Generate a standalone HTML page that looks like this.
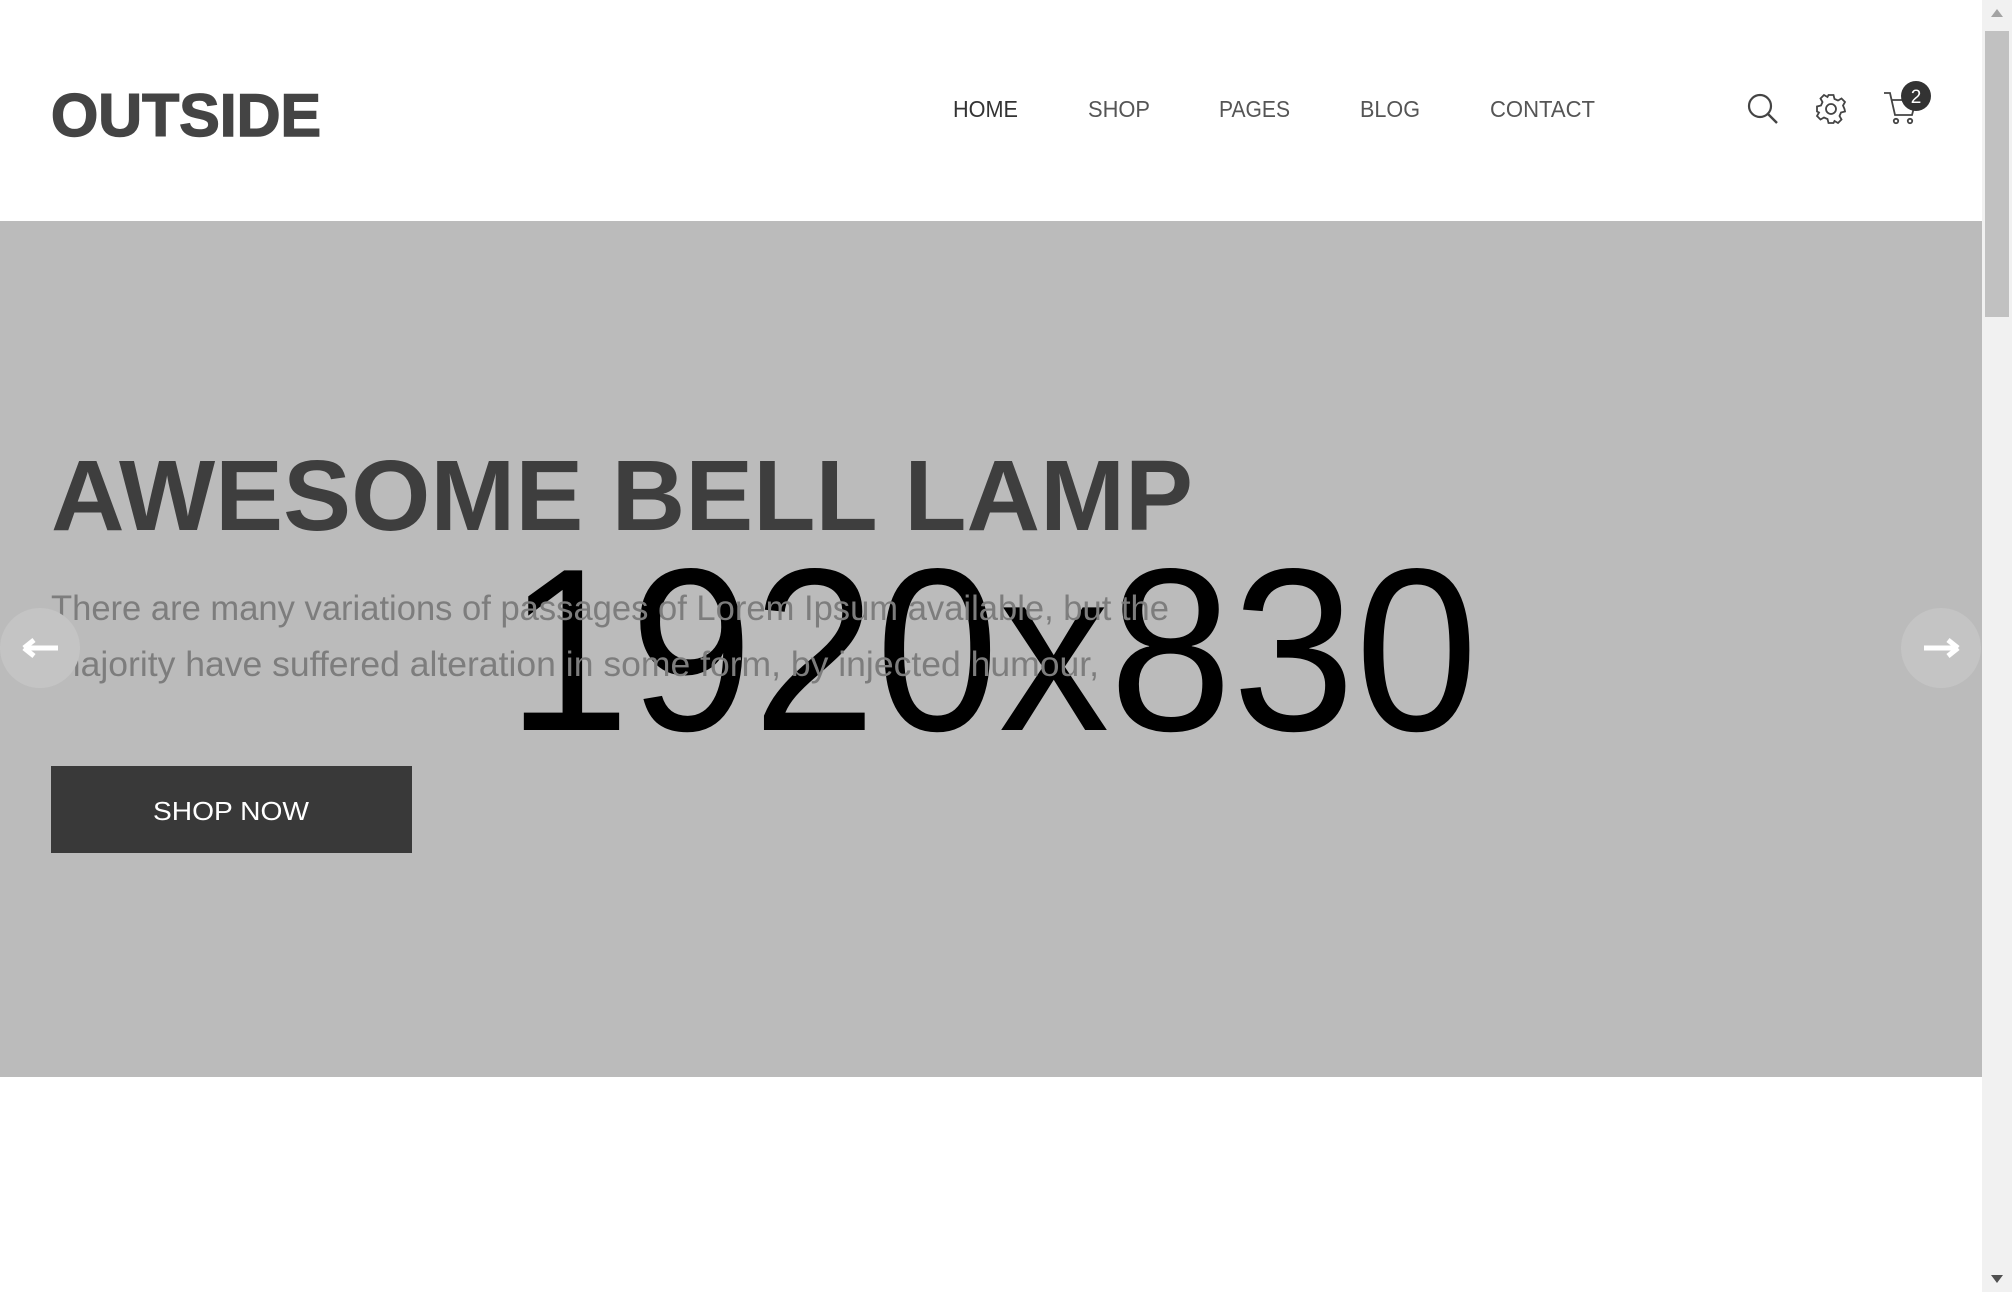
<!DOCTYPE html>
<html><head><meta charset="utf-8"><style>
html,body{margin:0;padding:0;width:2012px;height:1292px;overflow:hidden;background:#fff;font-family:"Liberation Sans",sans-serif}
.abs{position:absolute}
</style></head><body>
<svg class="abs" style="left:0;top:0" width="2012" height="1292" xmlns="http://www.w3.org/2000/svg">
<rect x="0" y="0" width="1982" height="1292" fill="#fff"/>
<text x="51" y="136" font-family="Liberation Sans" font-weight="bold" font-size="60" fill="#444" textLength="270" lengthAdjust="spacingAndGlyphs" stroke="#444" stroke-width="1.5">OUTSIDE</text>
<g font-family="Liberation Sans" font-size="23" fill="#555">
<text x="953" y="117" fill="#333" textLength="65" lengthAdjust="spacingAndGlyphs">HOME</text>
<text x="1088" y="117" textLength="62" lengthAdjust="spacingAndGlyphs">SHOP</text>
<text x="1219" y="117" textLength="71" lengthAdjust="spacingAndGlyphs">PAGES</text>
<text x="1360" y="117" textLength="60" lengthAdjust="spacingAndGlyphs">BLOG</text>
<text x="1490" y="117" textLength="105" lengthAdjust="spacingAndGlyphs">CONTACT</text>
</g>
<circle cx="1760" cy="106" r="11" fill="none" stroke="#444" stroke-width="2.2"/>
<line x1="1768" y1="114" x2="1777" y2="123" stroke="#444" stroke-width="2.4"/>
<g transform="translate(1831,109)" fill="none" stroke="#444" stroke-width="1.8">
<circle r="5"/>
<path d="M-2.5,-14 L2.5,-14 L3.5,-10 L7,-8.5 L10.5,-10.5 L14,-7 L12,-3.5 L13.5,0 L14,2.5 L10,3.5 L8.5,7 L10.5,10.5 L7,14 L3.5,12 L2.5,14 L-2.5,14 L-3.5,10 L-7,8.5 L-10.5,10.5 L-14,7 L-12,3.5 L-14,2.5 L-14,-2.5 L-10,-3.5 L-8.5,-7 L-10.5,-10.5 L-7,-14 L-3.5,-12 Z"/>
</g>
<g fill="none" stroke="#444" stroke-width="1.8">
<path d="M1884,93 L1890,93 L1895,115 L1912,115 L1916,100 L1892,100"/>
<circle cx="1896" cy="121" r="2.2"/><circle cx="1910" cy="121" r="2.2"/>
</g>
<circle cx="1916" cy="96" r="15" fill="#333"/>
<text x="1916" y="103" text-anchor="middle" font-size="19" fill="#fff" font-family="Liberation Sans">2</text>
<rect x="0" y="221" width="1982" height="856" fill="#bbb"/>
<text x="51" y="530" font-family="Liberation Sans" font-weight="bold" font-size="100" fill="#3e3e3e" textLength="1142" lengthAdjust="spacingAndGlyphs">AWESOME BELL LAMP</text>
<text x="507" y="730" font-family="Liberation Sans" font-size="232" fill="#000" textLength="971" lengthAdjust="spacingAndGlyphs">1920x830</text>
<g font-family="Liberation Sans" font-size="35" fill="#7d7d7d">
<text x="51" y="620" textLength="1118" lengthAdjust="spacingAndGlyphs">There are many variations of passages of Lorem Ipsum available, but the</text>
<text x="51" y="676" textLength="1048" lengthAdjust="spacingAndGlyphs">majority have suffered alteration in some form, by injected humour,</text>
</g>
<rect x="51" y="766" width="361" height="87" fill="#393939"/>
<text x="231" y="820" text-anchor="middle" font-family="Liberation Sans" font-size="26" fill="#fff" textLength="156" lengthAdjust="spacingAndGlyphs">SHOP NOW</text>
<circle cx="40" cy="648" r="40" fill="#c4c4c4"/>
<path d="M24,648 L58,648 M24,648 L34,640 M24,648 L34,656" stroke="#fff" stroke-width="5" fill="none"/>
<circle cx="1941" cy="648" r="40" fill="#c4c4c4"/>
<path d="M1924,648 L1958,648 M1958,648 L1948,640 M1958,648 L1948,656" stroke="#fff" stroke-width="5" fill="none"/>
<rect x="1982" y="0" width="30" height="1292" fill="#f1f1f1"/>
<rect x="1985" y="31" width="24" height="286" fill="#c1c1c1"/>
<path d="M1991,17 L1997,9 L2003,17 Z" fill="#a3a3a3"/>
<path d="M1991,1275 L1997,1283 L2003,1275 Z" fill="#505050"/>
</svg>
</body></html>
